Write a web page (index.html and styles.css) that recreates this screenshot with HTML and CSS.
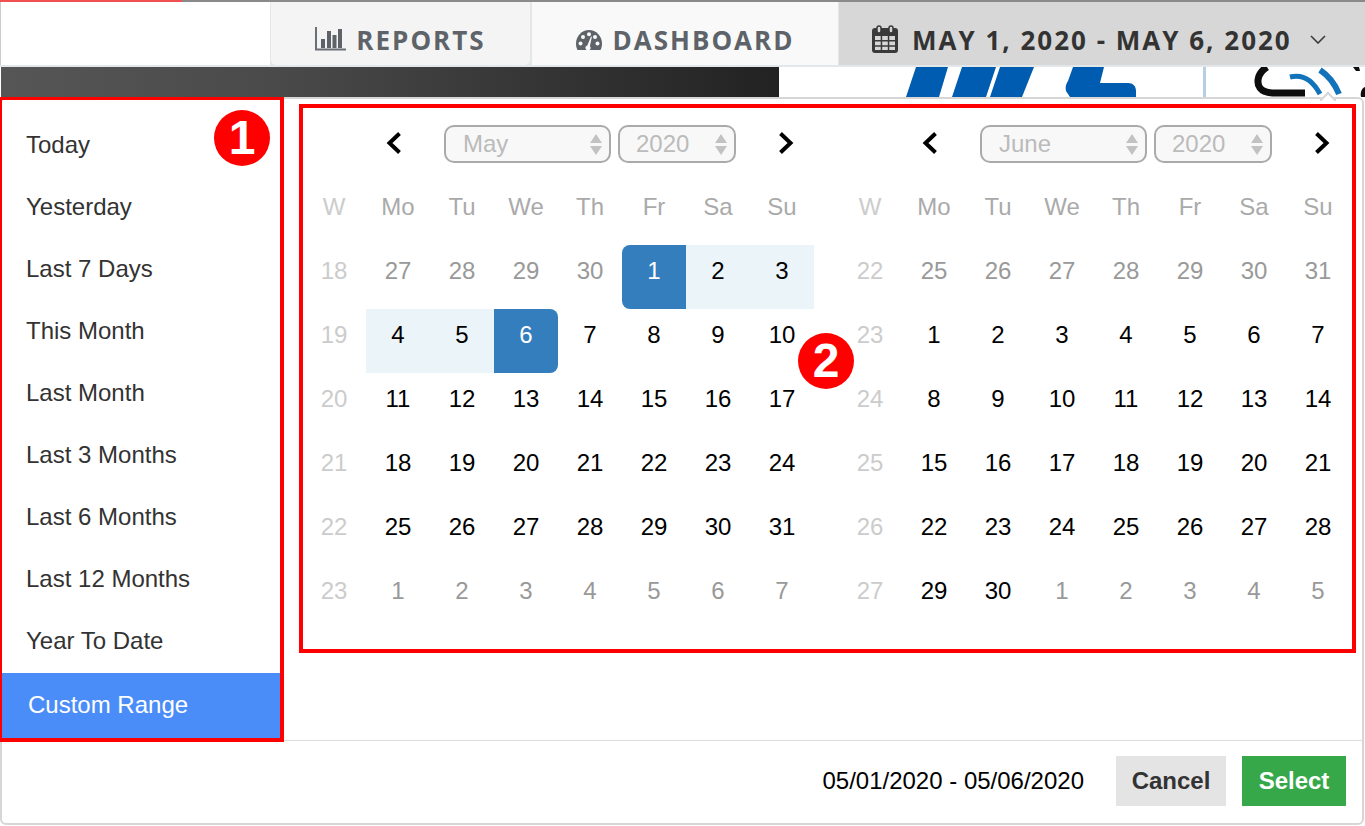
FILE: index.html
```html
<!DOCTYPE html>
<html lang="en">
<head>
  <meta charset="UTF-8">
  <title>Date Range</title>
  <link rel="stylesheet" href="styles.css">
</head>
<body>

  <div class="progress"></div>

  <nav class="topnav">
    <div class="brand"></div>
    <a class="tab tab-reports">
      <svg class="ico-bars" width="32" height="24" viewBox="0 0 32 24">
        <path d="M1 0v22.500h30" fill="none" stroke="#6a7075" stroke-width="2"/>
        <rect x="6" y="12" width="4" height="9" fill="#5d6368"/>
        <rect x="12" y="4" width="4" height="17" fill="#5d6368"/>
        <rect x="17.500" y="8" width="4" height="13" fill="#5d6368"/>
        <rect x="23" y="2" width="4" height="19" fill="#5d6368"/>
      </svg>
      <span>REPORTS</span>
    </a>
    <a class="tab tab-dash">
      <svg width="26" height="20" viewBox="0 0 26 20">
        <path d="M1.500 20C.5 18 0 16 0 13.500 0 6 6 0 13 0s13 6 13 13.500c0 2.500-.5 4.500-1.500 6.500z" fill="#5d6368"/>
        <g fill="#f9f9f9">
          <circle cx="4.500" cy="13.500" r="2"/>
          <circle cx="7" cy="7" r="2"/>
          <circle cx="13" cy="4.300" r="2"/>
          <circle cx="21.500" cy="13.500" r="2"/>
          <circle cx="19" cy="7" r="2"/>
          <path d="M11.300 15.500 15 6.500l.9.3-2 9.400a2.500 2.500 0 1 1-2.600-.7z"/>
        </g>
      </svg>
      <span>DASHBOARD</span>
    </a>
    <a class="tab tab-date">
      <svg width="26" height="28" viewBox="0 0 26 28">
        <path d="M3 3h20a3 3 0 0 1 3 3v19a3 3 0 0 1-3 3H3a3 3 0 0 1-3-3V6a3 3 0 0 1 3-3z" fill="#3a3a3a"/>
        <path d="M3 11h5.700v4H3zm7.200 0h5.600v4h-5.600zm7.100 0H23v4h-5.700zM3 16.500h5.700v3.700H3zm7.200 0h5.600v3.700h-5.600zm7.100 0H23v3.700h-5.700zM3 21.700h5.700V25H3zm7.200 0h5.600V25h-5.600zm7.100 0H23V25h-5.700z" fill="#d7d7d7"/>
        <rect x="5" y="1" width="4" height="7" rx="2" fill="#d7d7d7" stroke="#3a3a3a" stroke-width="1.500"/>
        <rect x="17" y="1" width="4" height="7" rx="2" fill="#d7d7d7" stroke="#3a3a3a" stroke-width="1.500"/>
      </svg>
      <span>MAY 1, 2020 - MAY 6, 2020</span>
      <svg class="caret" width="16" height="9" viewBox="0 0 16 9">
        <path d="M1 1l7 7 7-7" fill="none" stroke="#3a3a3a" stroke-width="1.600"/>
      </svg>
    </a>
  </nav>

  <div class="banner">
    <div class="banner-dark"></div>
    <svg class="banner-logo" width="586" height="30" viewBox="0 0 586 30">
      <g fill="#005cb0">
        <path d="M137 0h32l-9 30h-33z"/>
        <path d="M183 0h34l-10 30h-34z"/>
        <path d="M221 0h34l-12 30h-32z"/>
        <path d="M294 0h31l-4 16h28c5 0 8 3 8 8v6h-66l-4-6c-1-4 0-7 2-10z"/>
      </g>
      <rect x="424" y="0" width="3" height="30" fill="#b5d0e2"/>
      <g fill="none">
        <path d="M488 0c-11 7-10 17-7 21 3 4 8 5 15 5h30" stroke="#0d0d0d" stroke-width="7"/>
        <path d="M511 10c12-3 22 2 30 17" stroke="#1273ba" stroke-width="5"/>
        <path d="M541 3c9 6 15 14 19 24" stroke="#1273ba" stroke-width="6"/>
      </g>
      <path d="M574 0h6l1 4h-4zM586 20c-3 1-5 5-4 10h4z" fill="#0d0d0d"/>
    </svg>
  </div>

  <section class="picker">
    <div class="picker-arrow"></div>

    <div class="picker-main">
      <ul class="ranges">
        <li>Today</li>
        <li>Yesterday</li>
        <li>Last 7 Days</li>
        <li>This Month</li>
        <li>Last Month</li>
        <li>Last 3 Months</li>
        <li>Last 6 Months</li>
        <li>Last 12 Months</li>
        <li>Year To Date</li>
        <li class="active">Custom Range</li>
      </ul>

      <div class="calendars">
        <div class="cal">
          <div class="cal-nav">
            <svg class="chev" width="16" height="22" viewBox="0 0 16 22"><path d="M13.500 1.500 3.500 11l10 9.500" /></svg>
            <div class="sel sel-month">May<svg width="12" height="21" viewBox="0 0 12 21"><path d="M6 0l6 9H0zM6 21l-6-9h12z"/></svg></div>
            <div class="sel sel-year">2020<svg width="12" height="21" viewBox="0 0 12 21"><path d="M6 0l6 9H0zM6 21l-6-9h12z"/></svg></div>
            <svg class="chev chev-next" width="16" height="22" viewBox="0 0 16 22"><path d="M2.500 1.500 12.500 11l-10 9.500" /></svg>
          </div>
          <div class="row head"><span class="wk">W</span><span>Mo</span><span>Tu</span><span>We</span><span>Th</span><span>Fr</span><span>Sa</span><span>Su</span></div>
          <div class="row"><span class="wk">18</span><span class="off">27</span><span class="off">28</span><span class="off">29</span><span class="off">30</span><span class="sel-start">1</span><span class="range">2</span><span class="range">3</span></div>
          <div class="row"><span class="wk">19</span><span class="range">4</span><span class="range">5</span><span class="sel-end">6</span><span>7</span><span>8</span><span>9</span><span>10</span></div>
          <div class="row"><span class="wk">20</span><span>11</span><span>12</span><span>13</span><span>14</span><span>15</span><span>16</span><span>17</span></div>
          <div class="row"><span class="wk">21</span><span>18</span><span>19</span><span>20</span><span>21</span><span>22</span><span>23</span><span>24</span></div>
          <div class="row"><span class="wk">22</span><span>25</span><span>26</span><span>27</span><span>28</span><span>29</span><span>30</span><span>31</span></div>
          <div class="row"><span class="wk">23</span><span class="off">1</span><span class="off">2</span><span class="off">3</span><span class="off">4</span><span class="off">5</span><span class="off">6</span><span class="off">7</span></div>
        </div>

        <div class="cal">
          <div class="cal-nav">
            <svg class="chev" width="16" height="22" viewBox="0 0 16 22"><path d="M13.500 1.500 3.500 11l10 9.500" /></svg>
            <div class="sel sel-month">June<svg width="12" height="21" viewBox="0 0 12 21"><path d="M6 0l6 9H0zM6 21l-6-9h12z"/></svg></div>
            <div class="sel sel-year">2020<svg width="12" height="21" viewBox="0 0 12 21"><path d="M6 0l6 9H0zM6 21l-6-9h12z"/></svg></div>
            <svg class="chev chev-next" width="16" height="22" viewBox="0 0 16 22"><path d="M2.500 1.500 12.500 11l-10 9.500" /></svg>
          </div>
          <div class="row head"><span class="wk">W</span><span>Mo</span><span>Tu</span><span>We</span><span>Th</span><span>Fr</span><span>Sa</span><span>Su</span></div>
          <div class="row"><span class="wk">22</span><span class="off">25</span><span class="off">26</span><span class="off">27</span><span class="off">28</span><span class="off">29</span><span class="off">30</span><span class="off">31</span></div>
          <div class="row"><span class="wk">23</span><span>1</span><span>2</span><span>3</span><span>4</span><span>5</span><span>6</span><span>7</span></div>
          <div class="row"><span class="wk">24</span><span>8</span><span>9</span><span>10</span><span>11</span><span>12</span><span>13</span><span>14</span></div>
          <div class="row"><span class="wk">25</span><span>15</span><span>16</span><span>17</span><span>18</span><span>19</span><span>20</span><span>21</span></div>
          <div class="row"><span class="wk">26</span><span>22</span><span>23</span><span>24</span><span>25</span><span>26</span><span>27</span><span>28</span></div>
          <div class="row"><span class="wk">27</span><span>29</span><span>30</span><span class="off">1</span><span class="off">2</span><span class="off">3</span><span class="off">4</span><span class="off">5</span></div>
        </div>
      </div>
    </div>

    <div class="picker-foot">
      <span class="picked">05/01/2020 - 05/06/2020</span>
      <button class="btn btn-cancel">Cancel</button>
      <button class="btn btn-select">Select</button>
    </div>

    <div class="badge badge-one">1</div>
    <div class="badge badge-two">2</div>
  </section>

</body>
</html>
```

FILE: styles.css
```css
* {
  box-sizing: border-box;
}

html, body {
  margin: 0;
  height: 826px;
  overflow: hidden;
}

body {
  font-family: "Liberation Sans", Arial, sans-serif;
  font-size: 24px;
  color: #000;
  background-color: #fff;
}

.progress {
  height: 2px;
  background: linear-gradient(to right, #f05050 182px, #8a8a8a 182px);
}

/* top nav */
.topnav {
  display: flex;
  height: 65px;
  padding-bottom: 2px;
  background-color: #e3e7ea;
  font-family: "Open Sans", sans-serif;
  font-weight: 700;
  font-size: 26px;
  letter-spacing: 2px;
}

.brand {
  width: 271px;
  background-color: #fff;
  border-left: 1px solid #ccc;
  border-right: 1px solid #e3e7ea;
}

.tab {
  display: flex;
  align-items: center;
  justify-content: center;
  padding-top: 12px;
  color: #5d6368;
}

.tab-reports {
  width: 259px;
  gap: 9px;
  margin-right: 2px;
  background-color: #f4f4f4;
  border-radius: 0 0 5px 5px;
}

.ico-bars {
  margin-top: -1px;
}

.tab-dash {
  width: 306px;
  gap: 11px;
  margin-right: 1px;
  background-color: #f9f9f9;
}

.tab-date {
  flex: 1;
  justify-content: flex-start;
  gap: 14px;
  padding-left: 33px;
  background-color: #d7d7d7;
  color: #333;
  letter-spacing: 2px;
}

.tab-date svg {
  margin-top: -2px;
}

.tab-date .caret {
  margin: 0 0 0 4px;
}

/* banner under the nav */
.banner {
  display: flex;
  height: 30px;
}

.banner-dark {
  width: 778px;
  margin-left: 1px;
  background: linear-gradient(to right, #565656, #4a4a4a 35%, #222);
}

.banner-logo {
  display: block;
}

/* picker */
.picker {
  position: relative;
  height: 728px;
  width: 1364px;
  background-color: #fff;
  border: 2px solid #d6d6d6;
  border-radius: 6px;
}

.picker-arrow {
  position: absolute;
  top: -5px;
  left: 1320px;
  width: 12px;
  height: 12px;
  background-color: #fff;
  border-top: 2px solid #d6d6d6;
  border-left: 2px solid #d6d6d6;
  transform: rotate(45deg);
}

.picker-main {
  display: flex;
  align-items: flex-start;
  height: 641px;
}

.ranges {
  position: relative;
  list-style: none;
  width: 284px;
  height: 645px;
  margin: -2px 0 -2px -2px;
  padding: 14px 0 0;
  border: solid #f00;
  border-width: 3px 4px 4px 2px;
  color: #333;
}

.ranges li {
  height: 62px;
  line-height: 62px;
  padding-left: 24px;
}

.ranges li.active {
  height: 65px;
  margin-top: 1px;
  line-height: 63px;
  padding-left: 26px;
  background-color: #4b8df8;
  color: #fff;
}

.calendars {
  position: relative;
  display: flex;
  gap: 24px;
  width: 1057px;
  height: 549px;
  margin: 5px 0 0 15px;
  border: 4px solid #f00;
}

.cal {
  flex: none;
  width: 512px;
}

.cal:first-child {
  margin-left: -1px;
}

.cal-nav {
  display: flex;
  align-items: flex-start;
  height: 73px;
  padding: 17px 0 0 84px;
}

.chev {
  margin-top: 7px;
}

.chev path {
  fill: none;
  stroke: #000;
  stroke-width: 4;
}

.chev-next {
  margin-left: 42px;
}

.sel {
  display: flex;
  align-items: center;
  justify-content: space-between;
  height: 38px;
  padding: 0 7px 0 17px;
  background-color: #f8f8f8;
  border: 2px solid #aaa;
  border-radius: 10px;
  color: #bbb;
  line-height: 30px;
}

.sel svg {
  fill: #c2c2c2;
}

.sel-month {
  width: 167px;
  margin-left: 42px;
}

.sel-year {
  width: 118px;
  margin-left: 7px;
  padding-left: 16px;
}

.row {
  display: grid;
  grid-template-columns: repeat(8, 64px);
  height: 64px;
  text-align: center;
  line-height: 52px;
}

.row span {
  height: 64px;
}

.head {
  height: 52px;
  margin-bottom: 12px;
  line-height: 52px;
  color: #aaa;
}

.head span {
  height: 52px;
}

.row .wk {
  color: #ccc;
}

.row .off {
  color: #999;
}

.row .range {
  background-color: #ebf4f8;
}

.row .sel-start, .row .sel-end {
  background-color: #357ebd;
  color: #fff;
}

.row .sel-start {
  border-radius: 8px 0 0 8px;
}

.row .sel-end {
  border-radius: 0 8px 8px 0;
}

.picker-foot {
  display: flex;
  align-items: center;
  justify-content: flex-end;
  height: 83px;
  padding: 0 16px 2px 0;
  border-top: 1px solid #ddd;
}

.picked {
  margin-right: 32px;
}

.btn {
  height: 50px;
  padding: 0;
  border: none;
  font-family: inherit;
  font-size: 24px;
  font-weight: 700;
}

.btn-cancel {
  width: 110px;
  margin-right: 16px;
  background-color: #e4e4e4;
  color: #333;
}

.btn-select {
  width: 104px;
  background-color: #37a84a;
  color: #fff;
}

/* numbered callouts */
.badge {
  position: absolute;
  width: 56px;
  height: 56px;
  border-radius: 50%;
  background-color: #f00;
  color: #fff;
  font-weight: 700;
  font-size: 48px;
  line-height: 56px;
  text-align: center;
}

.badge-one {
  top: 11px;
  left: 212px;
}

.badge-two {
  top: 234px;
  left: 796px;
}
```
